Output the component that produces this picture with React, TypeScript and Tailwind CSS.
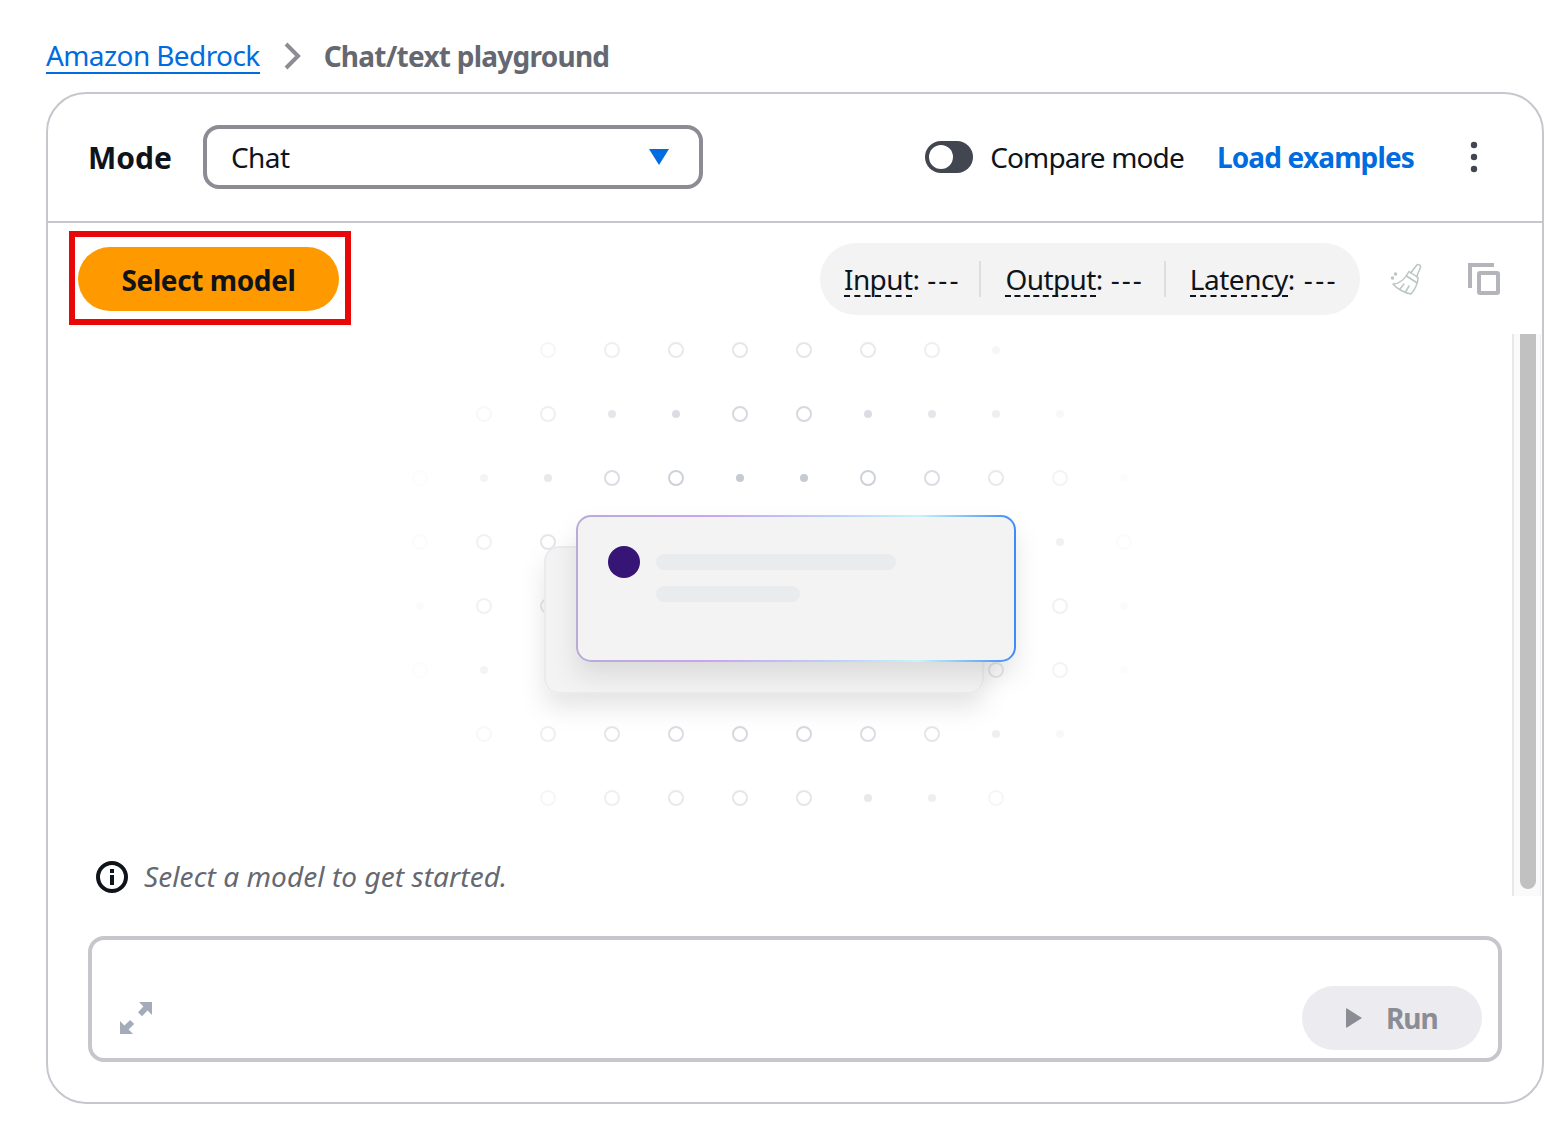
import React from "react";

const rows: [number, string][] = [
  [350, "..oooooood.."],
  [414, ".ooddoodddd."],
  [478, "oddooddooood"],
  [542, "ooo.......do"],
  [606, "doo.......od"],
  [670, "od.......ood"],
  [734, ".oooooooodd."],
  [798, "..oooooddo.."],
];

function Dots() {
  const out: React.ReactNode[] = [];
  rows.forEach(([y, s]) => {
    s.split("").forEach((c, i) => {
      if (c === ".") return;
      const x = 420 + i * 64;
      const d = Math.hypot(x - 772, y - 574);
      const op = Math.max(0.05, Math.min(1, Math.pow(Math.max(0, (410 - d) / 300), 1.5)));
      out.push(
        c === "o" ? (
          <circle key={`${x}-${y}`} cx={x - 400} cy={y - 334} r={7} fill="none" stroke="#c6cad3" strokeWidth={2} opacity={op} />
        ) : (
          <circle key={`${x}-${y}`} cx={x - 400} cy={y - 334} r={4} fill="#c6cad3" opacity={op} />
        ),
      );
    });
  });
  return <>{out}</>;
}

function Illustration() {
  return (
    <svg width="760" height="500" viewBox="0 0 760 500" className="block ml-[352px]">
      <defs>
        <linearGradient id="edge" x1="0" y1="0" x2="1" y2="0">
          <stop offset="0" stopColor="#b8abd6" />
          <stop offset="0.3" stopColor="#c9a4f2" />
          <stop offset="0.6" stopColor="#bfd0fa" />
          <stop offset="0.78" stopColor="#c4f3fb" />
          <stop offset="1" stopColor="#3f8cf7" />
        </linearGradient>
        <filter id="s1" x="-20%" y="-20%" width="140%" height="160%">
          <feDropShadow dx="0" dy="14" stdDeviation="12" floodColor="#000" floodOpacity="0.1" />
        </filter>
      </defs>
      <Dots />
      <rect x="145" y="213" width="438" height="146" rx="14" fill="#f3f3f4" stroke="#e9ebed" strokeWidth="2" filter="url(#s1)" />
      <rect x="177" y="182" width="438" height="145" rx="14" fill="#f3f3f4" stroke="url(#edge)" strokeWidth="2" filter="url(#s1)" />
      <circle cx="224" cy="228" r="16" fill="#361576" />
      <rect x="256" y="220" width="240" height="16" rx="8" fill="#e9ebed" />
      <rect x="256" y="252" width="144" height="16" rx="8" fill="#e9ebed" />
    </svg>
  );
}

function Stat({ label, wide }: { label: string; wide?: boolean }) {
  return (
    <span className="flex items-baseline">
      <span className={wide ? "inline-block leading-[31px] tracking-[-0.45px] border-b-2 border-dashed border-[#0f141a]" : "inline-block leading-[31px] border-b-2 border-dashed border-[#0f141a]"}>{label}</span>
      <span>:</span>
      <span className={wide ? "ml-[9px] tracking-[2.4px]" : "ml-[8px] tracking-[2px]"}>---</span>
    </span>
  );
}

export default function App() {
  return (
    <div className="h-[1124px] bg-white font-['Noto_Sans',sans-serif] text-[#0f141a] text-[28px] leading-[36px] tracking-[-0.6px] pl-[46px] pr-[20px] pt-[38px] overflow-hidden">
      <nav className="flex items-center h-[36px] mb-[18px]">
        <a className="text-[#006ce0] border-b-2 border-[#006ce0] leading-[34px] h-[36px]">Amazon Bedrock</a>
        <svg width="20" height="28" viewBox="0 0 20 28" className="ml-[22px] mr-[22px]">
          <path d="M4 2 L16 14 L4 26" fill="none" stroke="#8c8c94" strokeWidth="4" />
        </svg>
        <span className="font-bold text-[#656871] tracking-[-0.75px]">Chat/text playground</span>
      </nav>

      <div className="h-[1012px] border-2 border-[#c6c6cd] rounded-[40px] flex flex-col">
        <div className="h-[129px] shrink-0 border-b-2 border-[#c6c6cd] flex items-center pb-[1px] pl-[40px] pr-[64px]">
          <span className="font-bold text-[30px] tracking-normal w-[115px] pt-[2px]">Mode</span>
          <div className="w-[500px] h-[64px] border-4 border-[#8c8c94] rounded-[16px] flex items-center justify-between pl-[24px] pr-[30px]">
            <span>Chat</span>
            <svg width="20" height="16" viewBox="0 0 20 16" className="mb-[1px]">
              <path d="M0 0 H20 L10 16 Z" fill="#006ce0" />
            </svg>
          </div>
          <div className="flex-1" />
          <div className="w-[48px] h-[32px] rounded-full bg-[#424650] flex items-center pl-[4px]">
            <div className="w-[24px] h-[24px] rounded-full bg-white" />
          </div>
          <span className="ml-[17px] tracking-[-0.85px]">Compare mode</span>
          <span className="ml-[33px] font-bold text-[#006ce0] tracking-[-0.85px]">Load examples</span>
          <svg width="8" height="32" viewBox="0 0 8 32" className="ml-[56px]">
            <circle cx="4" cy="4" r="3.2" fill="#424650" />
            <circle cx="4" cy="16" r="3.2" fill="#424650" />
            <circle cx="4" cy="28" r="3.2" fill="#424650" />
          </svg>
        </div>

        <div className="h-[111px] shrink-0 flex items-start justify-between pl-[21px] pr-[42px]">
          <div className="mt-[8px] border-[6px] border-[#e80808] w-[282px] h-[94px] pl-[3px] pt-[10px]">
            <button className="w-[261px] h-[64px] pt-[2px] rounded-full bg-[#ff9900] font-bold text-[#0f141a] text-[28px] tracking-[-0.4px]">Select model</button>
          </div>
          <div className="flex items-center mt-[20px]">
            <div className="h-[72px] w-[540px] rounded-[36px] bg-[#f3f3f4] flex items-center pl-[24px]">
              <Stat label="Input" />
              <div className="w-[2px] h-[36px] bg-[#dbdfdf] ml-[19px] mr-[24px]" />
              <Stat label="Output" />
              <div className="w-[2px] h-[36px] bg-[#dbdfdf] ml-[20px] mr-[24px]" />
              <Stat label="Latency" wide />
            </div>
            <svg width="32" height="34" viewBox="0 0 32 34" className="ml-[30px]" fill="none" stroke="#b8c6c4" strokeWidth="1.5" strokeLinejoin="round" strokeLinecap="round">
              <path d="M20.5 11 L26.5 3.5 a2.2 2.2 0 0 1 3.8 2.2 L26.5 15" />
              <path d="M19 9.5 L28 15.5 C28 21 25 28 21 32 C15 31 7 27 3 22 C9 22 15 17 19 9.5 Z" />
              <path d="M16.5 14 L26.5 20.5" />
              <path d="M10 27 L14 22 M15.5 30 L19 24" />
              <circle cx="2.5" cy="16" r="1" fill="#b8c6c4" />
              <circle cx="5.5" cy="12" r="1" fill="#b8c6c4" />
            </svg>
            <svg width="32" height="32" viewBox="0 0 32 32" className="ml-[46px]" fill="none" stroke="#b4b4bb" strokeWidth="4">
              <path d="M2 25 V2 H26" />
              <rect x="11" y="10" width="19" height="20" rx="1" />
            </svg>
          </div>
        </div>

        <div className="h-[562px] shrink-0 flex pr-[1px]">
          <div className="flex-1 min-w-0">
            <Illustration />
            <div className="flex items-center ml-[48px] mt-[27px] h-[32px]">
              <svg width="32" height="32" viewBox="0 0 32 32">
                <circle cx="16" cy="16" r="14" fill="none" stroke="#0f141a" strokeWidth="4" />
                <rect x="14" y="14" width="4" height="10" fill="#0f141a" />
                <rect x="14" y="8" width="4" height="4" fill="#0f141a" />
              </svg>
              <span className="ml-[16px] mb-[2px] italic text-[#656871] tracking-[0.08px]">Select a model to get started.</span>
            </div>
          </div>
          <div className="w-[29px] shrink-0 border-l-2 border-r border-l-[#e8e8e8] border-r-[#f0f0f0] bg-[#fafafa] pl-[6px]">
            <div className="w-[16px] h-[555px] rounded-b-full bg-[#c1c1c1]" />
          </div>
        </div>

        <div className="mx-[40px] mt-[40px] h-[126px] border-4 border-[#c6c6cd] rounded-[16px] flex items-end justify-between pl-[28px] pr-[16px] pb-[8px]">
          <svg width="32" height="32" viewBox="0 0 32 32" className="mb-[16px]" fill="#a4acb9">
            <path d="M19 0 H32 V13 L27.6 8.6 L22 14.2 L18 10.2 L23.4 4.4 Z" />
            <path d="M0 19 V32 H13 L8.6 27.6 L14.2 22 L10.2 18 L4.4 23.4 Z" />
          </svg>
          <div className="w-[180px] h-[64px] rounded-full bg-[#ebebf0] flex items-center pl-[44px] font-bold text-[#8c8c94] tracking-[-1px]">
            <svg width="16" height="20" viewBox="0 0 16 20" className="mr-[24px]">
              <path d="M0 1 Q0 0 1 0.5 L16 10 L1 19.5 Q0 20 0 19 Z" fill="#8c8c94" />
            </svg>
            <span>Run</span>
          </div>
        </div>
      </div>
    </div>
  );
}
